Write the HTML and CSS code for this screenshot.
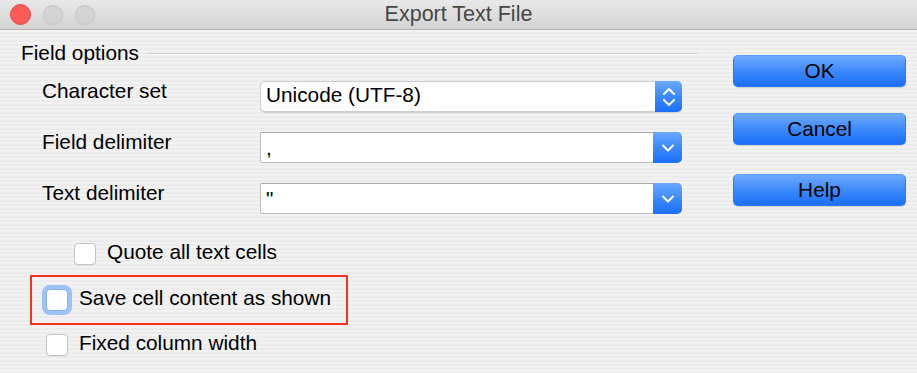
FILE: index.html
```html
<!DOCTYPE html>
<html lang="en">
<head>
<meta charset="utf-8">
<title>Export Text File</title>
<link rel="stylesheet" href="styles.css">
</head>
<body>
<div class="window">
  <div class="titlebar">
    <div class="lights">
      <span class="light red"></span>
      <span class="light"></span>
      <span class="light"></span>
    </div>
    <div class="title">Export Text File</div>
    <div></div>
  </div>
  <div class="content">
    <div class="main">
      <div class="section-head"><span>Field options</span><div class="rule"></div></div>

      <div class="field-row">
        <div class="label">Character set</div>
        <div class="popup">
          <div class="value">Unicode (UTF-8)</div>
          <div class="stepper">
            <svg width="14" height="20" viewBox="0 0 14 20"><path d="M2 7 L7 2 L12 7 M2 13 L7 18 L12 13" fill="none" stroke="#fff" stroke-width="2" stroke-linecap="round" stroke-linejoin="round"/></svg>
          </div>
        </div>
      </div>

      <div class="field-row second">
        <div class="label">Field delimiter</div>
        <div class="combo">
          <div class="value">,</div>
          <div class="drop">
            <svg width="14" height="10" viewBox="0 0 14 10"><path d="M2 2.5 L7 7.5 L12 2.5" fill="none" stroke="#fff" stroke-width="2" stroke-linecap="round" stroke-linejoin="round"/></svg>
          </div>
        </div>
      </div>

      <div class="field-row second">
        <div class="label">Text delimiter</div>
        <div class="combo">
          <div class="value">"</div>
          <div class="drop">
            <svg width="14" height="10" viewBox="0 0 14 10"><path d="M2 2.5 L7 7.5 L12 2.5" fill="none" stroke="#fff" stroke-width="2" stroke-linecap="round" stroke-linejoin="round"/></svg>
          </div>
        </div>
      </div>

      <div class="check-row quote">
        <span class="checkbox"></span><span>Quote all text cells</span>
      </div>

      <div class="highlight">
        <div class="check-row">
          <span class="checkbox focused"></span><span>Save cell content as shown</span>
        </div>
      </div>

      <div class="check-row fixed">
        <span class="checkbox"></span><span>Fixed column width</span>
      </div>
    </div>

    <div class="buttons">
      <div class="btn ok">OK</div>
      <div class="btn cancel">Cancel</div>
      <div class="btn help">Help</div>
    </div>
  </div>
</div>
</body>
</html>
```

FILE: styles.css
```css
* { box-sizing: border-box; }

html, body {
  margin: 0;
  padding: 0;
}

body {
  font-family: "Liberation Sans", Helvetica, Arial, sans-serif;
  font-size: 20.8px;
  color: #000;
  background: #efefef;
}

.window {
  width: 917px;
  height: 373px;
  overflow: hidden;
  display: flex;
  flex-direction: column;
}

.titlebar {
  height: 30px;
  flex: none;
  display: grid;
  grid-template-columns: 1fr auto 1fr;
  align-items: center;
  background: linear-gradient(#e9e9e9, #d3d3d3);
  border-bottom: 1px solid #b3b3b3;
}

.lights {
  display: flex;
  gap: 12px;
  padding-left: 10px;
  align-items: center;
}

.light {
  width: 20px;
  height: 20px;
  border-radius: 50%;
  background: #d4d4d4;
  border: 1px solid #c2c2c2;
}

.light.red {
  width: 21px;
  height: 21px;
  background: #fc5b57;
  border-color: #e4463f;
}

.title {
  font-size: 21.5px;
  line-height: 29px;
  color: #474747;
  text-align: center;
}

.content {
  flex: 1;
  display: flex;
  background: repeating-linear-gradient(#f2f2f2 0 2px, #ececec 2px 4px);
}

.main {
  margin-left: 21px;
  width: 677px;
  padding-top: 11px;
}

.section-head {
  display: flex;
  align-items: center;
  line-height: 24px;
  height: 24px;
  gap: 8px;
}

.rule {
  flex: 1;
  height: 1px;
  background: #d2d2d2;
  box-shadow: 0 1px 0 #f8f8f8;
}

.field-row {
  display: flex;
  align-items: flex-start;
  margin-top: 16px;
}

.field-row.second {
  margin-top: 20px;
}

.label {
  width: 218px;
  margin-left: 21px;
  margin-top: -2px;
  line-height: 24px;
}

.popup, .combo {
  width: 422px;
  height: 31px;
  display: flex;
  background: #fff;
  line-height: 24px;
}

.popup {
  border: 1px solid #cfcfcf;
  border-radius: 5px;
  box-shadow: 0 1px 1px rgba(0,0,0,0.12);
}

.combo {
  border: 1px solid #bdbdbd;
  border-top-color: #a9a9a9;
  border-radius: 2px 5px 5px 2px;
}

.value {
  flex: 1;
  padding-left: 5px;
  padding-top: 1px;
}

.combo .value {
  padding-top: 3px;
}

.stepper, .drop {
  display: flex;
  align-items: center;
  justify-content: center;
  margin: -1px -1px -1px 0;
  background: linear-gradient(#6aa9fd, #3886fb 55%, #1b70f8);
  border-radius: 0 5px 5px 0;
}

.stepper {
  width: 27px;
}

.drop {
  width: 29px;
}

.check-row {
  display: flex;
  align-items: flex-start;
  gap: 11px;
  line-height: 24px;
}

.check-row.quote {
  margin-top: 26px;
  margin-left: 53px;
}

.check-row.fixed {
  margin-top: 6px;
  margin-left: 25px;
}

.checkbox {
  width: 22px;
  height: 22px;
  margin-top: 3px;
  flex: none;
  background: #fff;
  border: 1px solid #c4c4c4;
  border-radius: 4px;
  box-shadow: 0 1px 1px rgba(0,0,0,0.06);
}

.checkbox.focused {
  border-color: #88b2ee;
  box-shadow: 0 0 0 4px #9cc3f8;
}

.highlight {
  margin-top: 10px;
  margin-left: 9px;
  width: 318px;
  border: 2px solid #f5331f;
  padding: 9px 0 12px 14px;
}

.buttons {
  margin-left: 35px;
  width: 173px;
  padding-top: 25px;
  display: flex;
  flex-direction: column;
}

.btn {
  height: 32px;
  line-height: 30px;
  text-align: center;
  border: 1px solid #2e78f3;
  border-top-color: #5a9bfb;
  border-radius: 5px;
  background: linear-gradient(#6ea9fd, #3a87fb 55%, #1a6ff8);
  box-shadow: 0 1px 1px rgba(0,0,0,0.15);
}

.btn.cancel {
  margin-top: 26px;
}

.btn.help {
  margin-top: 29px;
}
```
